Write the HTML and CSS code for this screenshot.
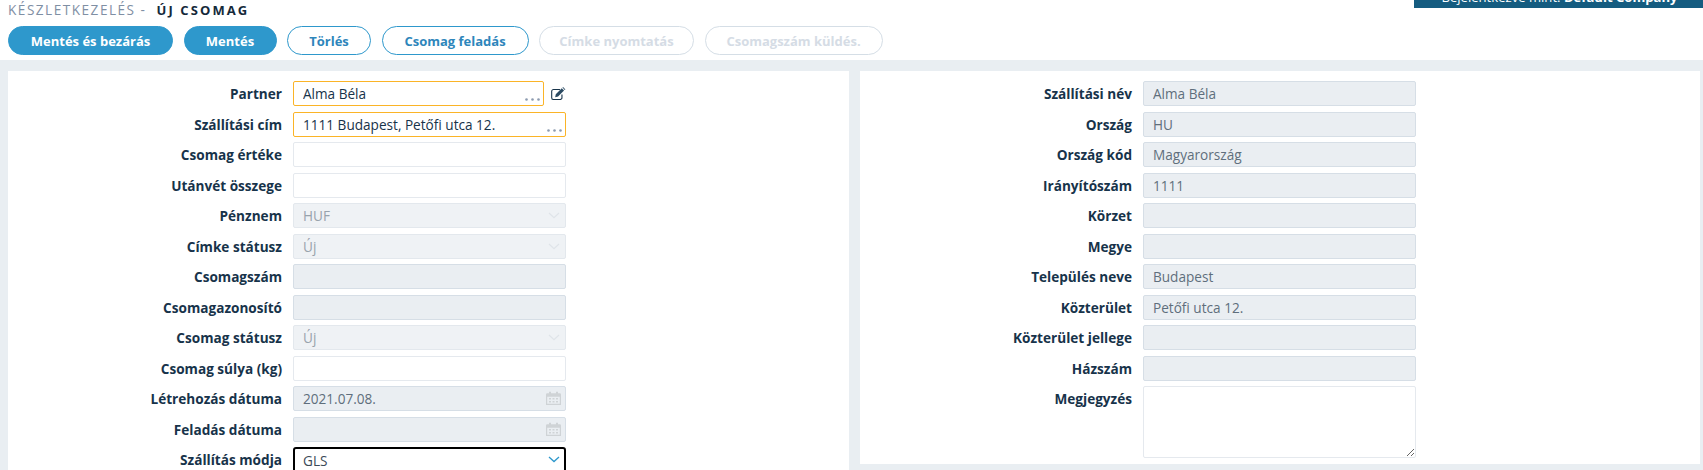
FILE: index.html
```html
<!DOCTYPE html>
<html lang="hu">
<head>
    <meta charset="UTF-8">
    <meta name="viewport" content="width=device-width, initial-scale=1.0">
    <title>Új csomag</title>
    <link rel="stylesheet" href="styles.css">
</head>
<body>
    <header class="page-head">
        <div class="title-row">
            <h1 class="page-title">Készletkezelés - <strong>Új csomag</strong></h1>
            <div class="user-box"><span>Bejelentkezve mint: <b>Default Company</b></span></div>
        </div>
        <div class="toolbar">
            <button class="btn btn-primary btn-save-close">Mentés és bezárás</button>
            <button class="btn btn-primary btn-save">Mentés</button>
            <button class="btn btn-outline btn-delete">Törlés</button>
            <button class="btn btn-outline btn-send">Csomag feladás</button>
            <button class="btn btn-disabled btn-print">Címke nyomtatás</button>
            <button class="btn btn-disabled btn-number">Csomagszám küldés.</button>
        </div>
    </header>

    <main class="content">
        <!-- Left panel -->
        <section class="panel panel-left">
            <div class="row">
                <label>Partner</label>
                <div class="partner-field">
                    <div class="field">
                        <input class="input input-picked" type="text" value="Alma Béla">
                        <svg class="dots" width="15" height="3" viewBox="0 0 15 3"><circle cx="1.500" cy="1.500" r="1.300"/><circle cx="7.500" cy="1.500" r="1.300"/><circle cx="13.500" cy="1.500" r="1.300"/></svg>
                    </div>
                    <svg class="edit-icon" width="15" height="13" viewBox="0 0 15 13">
                        <path d="M9 2.500H2.500A1.800 1.800 0 0 0 .7 4.300v6.400a1.800 1.800 0 0 0 1.800 1.800h6.700a1.800 1.800 0 0 0 1.800-1.800V7.500" fill="none" stroke="#17334a" stroke-width="1.100"/>
                        <path d="M4.800 7.300 10.800 1.300l2.300 2.300-6 6-2.900.7zM11.500.6l.6-.6 2.400 2.400-.7.600z" fill="#2a4a62"/>
                    </svg>
                </div>
            </div>
            <div class="row">
                <label>Szállítási cím</label>
                <div class="field">
                    <input class="input input-picked" type="text" value="1111 Budapest, Petőfi utca 12.">
                    <svg class="dots" width="15" height="3" viewBox="0 0 15 3"><circle cx="1.500" cy="1.500" r="1.300"/><circle cx="7.500" cy="1.500" r="1.300"/><circle cx="13.500" cy="1.500" r="1.300"/></svg>
                </div>
            </div>
            <div class="row"><label>Csomag értéke</label><input class="input" type="text"></div>
            <div class="row"><label>Utánvét összege</label><input class="input" type="text"></div>
            <div class="row">
                <label>Pénznem</label>
                <div class="field">
                    <select class="input select-off" disabled><option>HUF</option></select>
                    <svg class="chevron chevron-off" width="12" height="7" viewBox="0 0 12 7"><path d="M1 1l5 4.600L11 1" fill="none" stroke="currentColor" stroke-width="1.200"/></svg>
                </div>
            </div>
            <div class="row">
                <label>Címke státusz</label>
                <div class="field">
                    <select class="input select-off" disabled><option>Új</option></select>
                    <svg class="chevron chevron-off" width="12" height="7" viewBox="0 0 12 7"><path d="M1 1l5 4.600L11 1" fill="none" stroke="currentColor" stroke-width="1.200"/></svg>
                </div>
            </div>
            <div class="row"><label>Csomagszám</label><input class="input input-off" type="text" disabled></div>
            <div class="row"><label>Csomagazonosító</label><input class="input input-off" type="text" disabled></div>
            <div class="row">
                <label>Csomag státusz</label>
                <div class="field">
                    <select class="input select-off" disabled><option>Új</option></select>
                    <svg class="chevron chevron-off" width="12" height="7" viewBox="0 0 12 7"><path d="M1 1l5 4.600L11 1" fill="none" stroke="currentColor" stroke-width="1.200"/></svg>
                </div>
            </div>
            <div class="row"><label>Csomag súlya (kg)</label><input class="input" type="text"></div>
            <div class="row">
                <label>Létrehozás dátuma</label>
                <div class="field">
                    <input class="input input-off" type="text" value="2021.07.08." disabled>
                    <svg class="calendar" width="15" height="14" viewBox="0 0 15 14"><path d="M0 3.500A1.300 1.300 0 0 1 1.300 2.200H3V.8h2v1.400h5V.8h2v1.400h1.700A1.300 1.300 0 0 1 15 3.500V14H0zM1.200 5.800v7h12.600v-7zM3 7h2v1.500H3zm3.500 0h2v1.500h-2zM10 7h2v1.500h-2zM3 10h2v1.500H3zm3.500 0h2v1.500h-2zm3.500 0h2v1.500h-2z" fill="#cfd3d6" fill-rule="evenodd"/></svg>
                </div>
            </div>
            <div class="row">
                <label>Feladás dátuma</label>
                <div class="field">
                    <input class="input input-off" type="text" disabled>
                    <svg class="calendar" width="15" height="14" viewBox="0 0 15 14"><path d="M0 3.500A1.300 1.300 0 0 1 1.300 2.200H3V.8h2v1.400h5V.8h2v1.400h1.700A1.300 1.300 0 0 1 15 3.500V14H0zM1.200 5.800v7h12.600v-7zM3 7h2v1.500H3zm3.500 0h2v1.500h-2zM10 7h2v1.500h-2zM3 10h2v1.500H3zm3.500 0h2v1.500h-2zm3.500 0h2v1.500h-2z" fill="#cfd3d6" fill-rule="evenodd"/></svg>
                </div>
            </div>
            <div class="row">
                <label>Szállítás módja</label>
                <div class="field">
                    <select class="input select-focus"><option>GLS</option></select>
                    <svg class="chevron" width="12" height="7" viewBox="0 0 12 7"><path d="M1 1l5 4.600L11 1" fill="none" stroke="currentColor" stroke-width="1.300"/></svg>
                </div>
            </div>
        </section>

        <!-- Right panel -->
        <section class="panel panel-right">
            <div class="row"><label>Szállítási név</label><input class="input input-off" type="text" value="Alma Béla" disabled></div>
            <div class="row"><label>Ország</label><input class="input input-off" type="text" value="HU" disabled></div>
            <div class="row"><label>Ország kód</label><input class="input input-off" type="text" value="Magyarország" disabled></div>
            <div class="row"><label>Irányítószám</label><input class="input input-off" type="text" value="1111" disabled></div>
            <div class="row"><label>Körzet</label><input class="input input-off" type="text" disabled></div>
            <div class="row"><label>Megye</label><input class="input input-off" type="text" disabled></div>
            <div class="row"><label>Település neve</label><input class="input input-off" type="text" value="Budapest" disabled></div>
            <div class="row"><label>Közterület</label><input class="input input-off" type="text" value="Petőfi utca 12." disabled></div>
            <div class="row"><label>Közterület jellege</label><input class="input input-off" type="text" disabled></div>
            <div class="row"><label>Házszám</label><input class="input input-off" type="text" disabled></div>
            <div class="row"><label>Megjegyzés</label><textarea class="input notes"></textarea></div>
        </section>
    </main>
</body>
</html>
```
FILE: styles.css
```css
/* Global Styles */
html, body {
    height: 470px;
    overflow: hidden;
}

body {
    margin: 0;
    background-color: #fff;
    font-family: "Open Sans", Arial, sans-serif;
    font-size: 13.6px;
    color: #17334a;
}

/* Header */
.page-head {
    height: 60px;
}

.title-row {
    display: flex;
    justify-content: space-between;
    height: 26px;
}

.page-title {
    margin: 0;
    padding-left: 8px;
    font-size: 13.6px;
    font-weight: 400;
    line-height: 20px;
    letter-spacing: 1.5px;
    text-transform: uppercase;
    color: #7f8fa4;
}

.page-title strong {
    margin-left: 5px;
    font-size: 13px;
    font-weight: 700;
    letter-spacing: 2.1px;
    color: #14293a;
}

.user-box {
    width: 289px;
    height: 8px;
    padding-left: 2px;
    box-sizing: border-box;
    overflow: hidden;
    background-color: #155c80;
    color: #fff;
    text-align: center;
    font-size: 13.1px;
    line-height: 18px;
}

.user-box span {
    display: block;
    margin-top: -12px;
}

/* Buttons */
.toolbar {
    display: flex;
    gap: 10.5px;
    padding-left: 8px;
}

.btn {
    height: 29px;
    padding: 0;
    border: 1px solid #2e98cc;
    border-radius: 15px;
    background: #fff;
    font-family: inherit;
    font-size: 13px;
    font-weight: 700;
    color: #2e86bb;
}

.btn-primary {
    background-color: #2e98cc;
    color: #fff;
}

.btn-save-close { width: 165px; }
.btn-save { width: 93px; }
.btn-delete { width: 84px; }
.btn-send { width: 147px; }

.btn-disabled {
    border-color: #d5dee6;
    color: #d5dce5;
}

.btn-print { width: 155px; }
.btn-number { width: 178px; }

/* Panels */
.content {
    display: grid;
    grid-template-columns: 841px 840px;
    gap: 11px;
    align-items: start;
    height: 410px;
    padding: 11px 3px 0 8px;
    box-sizing: border-box;
    background-color: #e9eef2;
}

.panel {
    display: flex;
    flex-direction: column;
    gap: 5.5px;
    padding: 10px 0 6px;
    background-color: #fff;
}

.row {
    display: grid;
    grid-template-columns: 274px 273px;
    column-gap: 11px;
}

.panel-right .row {
    grid-template-columns: 272px 273px;
}

.row label {
    font-weight: 700;
    line-height: 25px;
    text-align: right;
    white-space: nowrap;
}

/* Inputs */
.field {
    position: relative;
    width: 100%;
}

.input {
    display: block;
    width: 100%;
    height: 25px;
    padding: 0 9px;
    box-sizing: border-box;
    border: 1px solid #e5e9ee;
    border-radius: 2px;
    background-color: #fff;
    font-family: inherit;
    font-size: 13.6px;
    color: #17334a;
    outline: none;
}

.input-picked {
    border-color: #fbb427;
}

.input-off,
.select-off {
    border-color: #d6dee6;
    background-color: #eaeef2;
    color: #5f6e7c;
    opacity: 1;
}

select.input {
    appearance: none;
}

.select-off {
    border-color: #e3e8ed;
    background-color: #eff2f5;
    color: #98a2ac;
}

.select-focus {
    border: 2px solid #000;
    border-radius: 3px;
    padding-left: 8px;
    height: 26px;
    color: #3c4a57;
}

.notes {
    height: 72px;
    padding: 6px 9px;
}

.partner-field {
    display: flex;
    align-items: center;
}

.partner-field .field {
    width: 252px;
}

.edit-icon {
    margin-left: 7px;
    margin-top: -1px;
}

.dots {
    position: absolute;
    right: 4px;
    bottom: 5px;
    fill: #8d9bb0;
}

.chevron {
    position: absolute;
    right: 6px;
    top: 9px;
    color: #2e98cc;
}

.chevron-off {
    color: #dfe4e9;
}

.calendar {
    position: absolute;
    right: 5px;
    top: 5px;
}
```
